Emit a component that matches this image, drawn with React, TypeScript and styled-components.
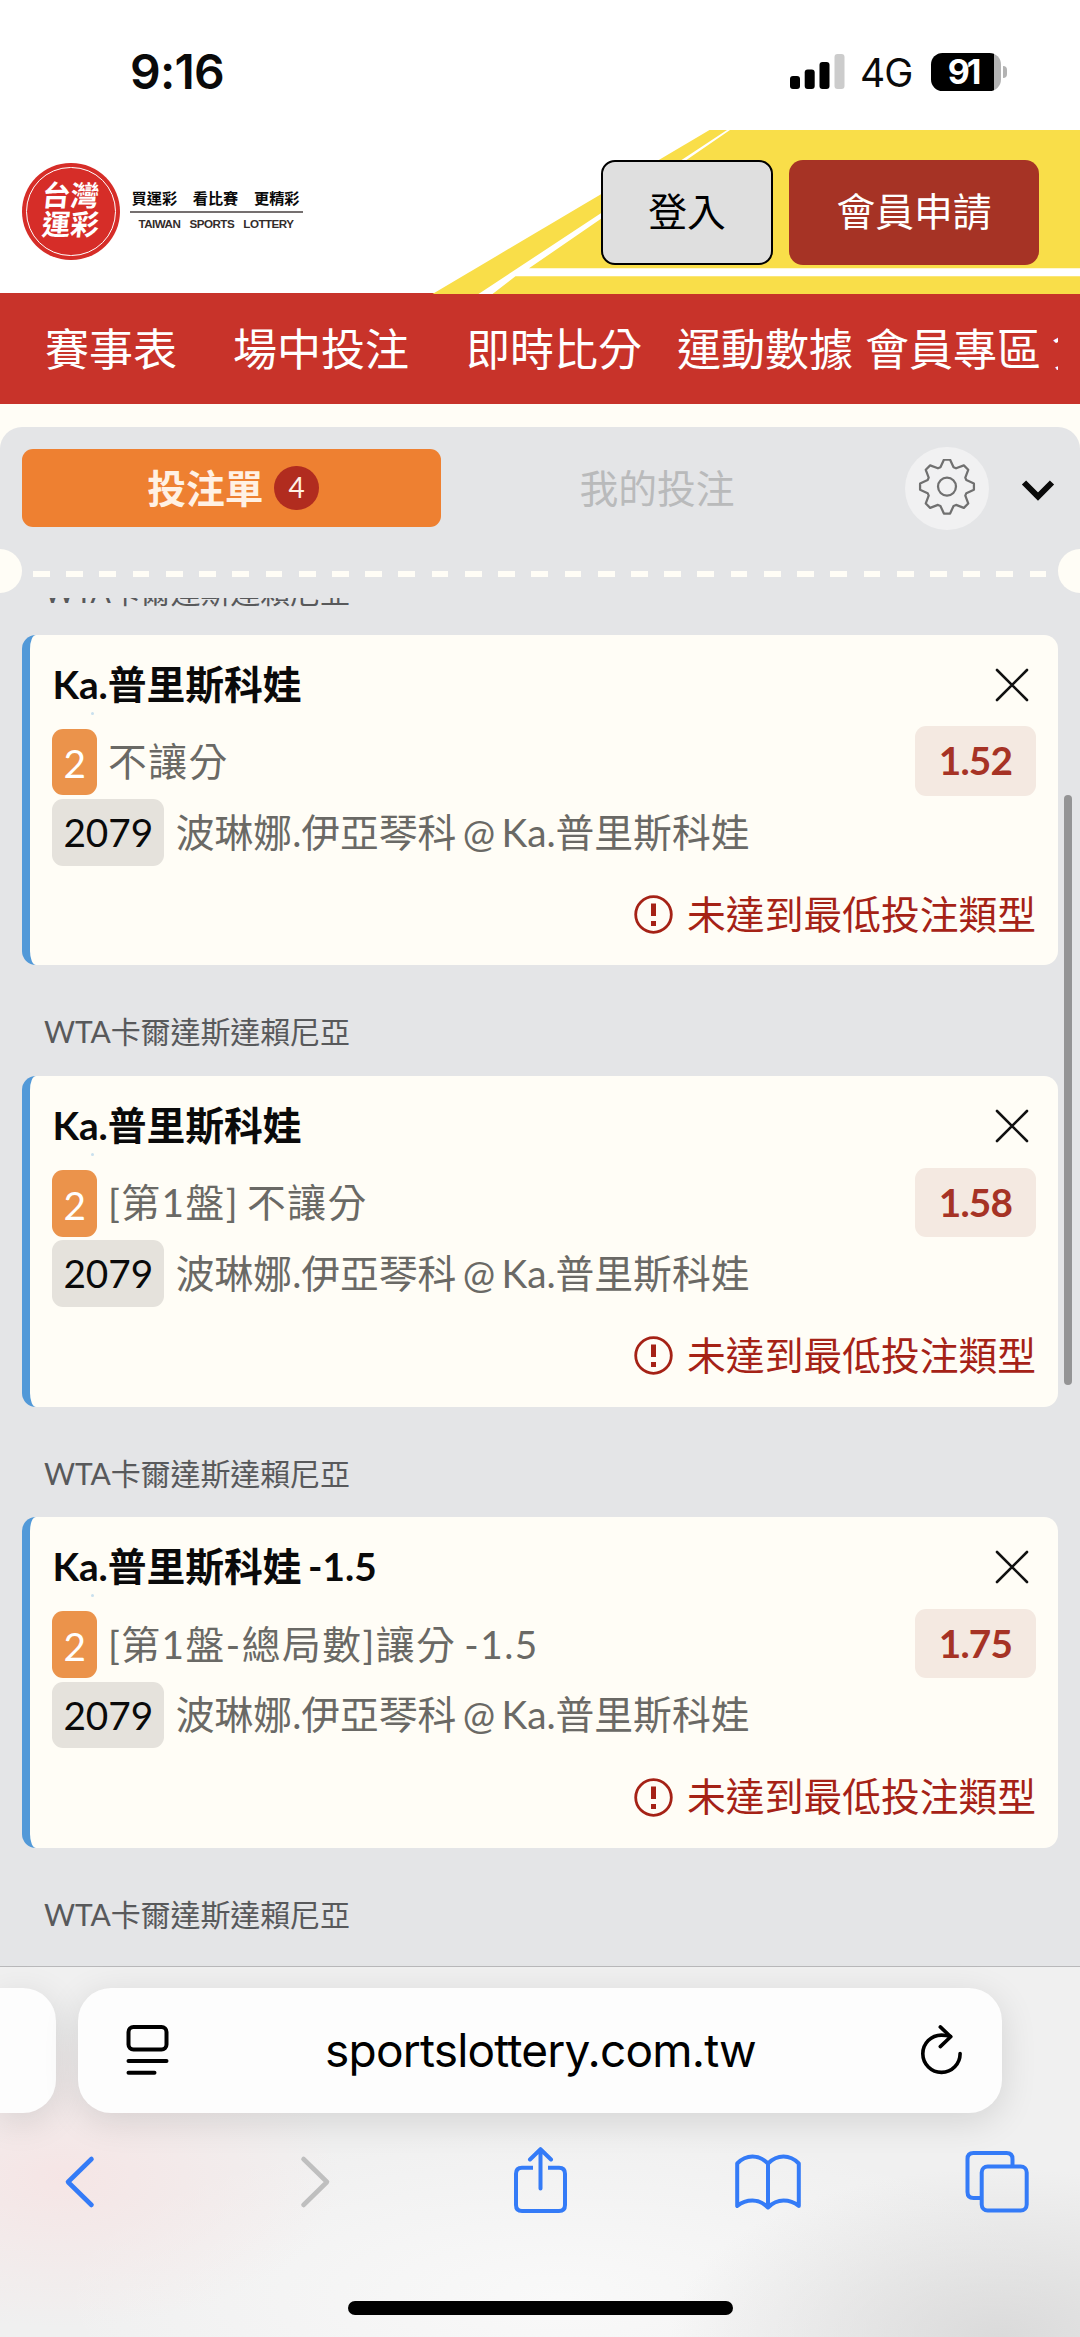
import React from "react";
import styled, { createGlobalStyle } from "styled-components";

const CREAM = "#fffdf6";
const BLUE = "#347bf7";

const GlobalStyle = createGlobalStyle`
  * { box-sizing: border-box; }
  body { margin: 0; background: #fff; }
  button { font: inherit; border: 0; padding: 0; background: none; color: inherit; }
  svg { display: block; flex: none; }
`;

const Screen = styled.div`
  width: 1080px;
  height: 2337px;
  display: flex;
  flex-direction: column;
  overflow: hidden;
  background: #fff;
  color: #0a0a0a;
  font-family: Lato, "Noto Sans CJK TC", sans-serif;
  font-size: 38.77px;
`;

/* ---------- status bar ---------- */

const StatusBar = styled.div`
  flex: none;
  height: 130px;
  padding: 13px 73px 0 130px;
  display: flex;
  align-items: center;
  justify-content: space-between;
  font-family: Inter, sans-serif;
`;

const Clock = styled.span`
  font-size: 48px;
  font-weight: 600;
  letter-spacing: -0.8px;
  line-height: 60px;
`;

const StatusIcons = styled.div`
  display: flex;
  align-items: center;
`;

const Network = styled.span`
  margin: 3px 0 0 15px;
  width: 71px;
  font-size: 39px;
  line-height: 48px;
  letter-spacing: -1px;
`;

const Battery = styled.div`
  width: 70px;
  height: 38px;
  border-radius: 11.5px;
  display: flex;
  align-items: center;
  justify-content: center;
  padding-right: 6px;
  background: linear-gradient(90deg, #000 63px, #b3b3b3 63px);
  color: #fff;
  font-size: 34px;
  font-weight: 700;
  letter-spacing: -3px;
`;

const BatteryTip = styled.div`
  margin-left: 2px;
  width: 4px;
  height: 12px;
  border-radius: 0 5px 5px 0;
  background: #b3b3b3;
`;

/* ---------- site header ---------- */

const Header = styled.header`
  position: relative;
  flex: none;
  height: 163.4px;
  padding: 29.6px 41px 0 22px;
  display: flex;
  align-items: flex-start;
`;

const HeaderArt = styled.svg`
  position: absolute;
  left: 0;
  top: 0;
`;

const Brand = styled.div`
  position: relative;
  display: flex;
  gap: 10px;
  margin-top: 3px;
`;

const Seal = styled.div`
  width: 97.5px;
  height: 97.5px;
  padding: 4px;
  border-radius: 50%;
  background: #d62d28;
`;

const SealRing = styled.div`
  height: 100%;
  padding-bottom: 2px;
  display: flex;
  flex-direction: column;
  align-items: center;
  justify-content: center;
  border: 1.8px solid #fff;
  border-radius: 50%;
  color: #fff;
  font-size: 28.5px;
  font-weight: 600;
  line-height: 29.5px;
`;

const SealText = styled.span`
  transform: skewX(-6deg);
`;

const Slogan = styled.div`
  width: 173px;
  padding-top: 23px;
  display: flex;
  flex-direction: column;
`;

const SloganZh = styled.div`
  display: flex;
  justify-content: space-between;
  padding: 0 3px 0 2px;
  height: 27px;
  border-bottom: 2px solid #757070;
  font-size: 15.2px;
  line-height: 24px;
  font-weight: 700;
`;

const SloganEn = styled.div`
  display: flex;
  justify-content: space-between;
  padding: 4px 9px 0;
  color: #332c2b;
  font-family: "Liberation Sans", sans-serif;
  font-size: 11.6px;
  letter-spacing: -0.5px;
  font-weight: 700;
  line-height: 14px;
`;

const HeaderButtons = styled.div`
  position: relative;
  margin-left: auto;
  display: flex;
  gap: 16px;
`;

const HeaderButton = styled.button<{ $primary?: boolean }>`
  width: ${(p) => (p.$primary ? 250 : 172)}px;
  height: 105.5px;
  padding-bottom: 2px;
  border-radius: 14px;
  border: ${(p) => (p.$primary ? "0" : "2.5px solid #000")};
  background: ${(p) => (p.$primary ? "#a63325" : "#dfdfdf")};
  color: ${(p) => (p.$primary ? "#fff" : "#000")};
  line-height: 56px;
`;

const Nav = styled.nav`
  flex: none;
  height: 110.9px;
  padding: 0 22px 0 45px;
  display: flex;
  align-items: center;
  background: #c8332a;
`;

const NavTrack = styled.div`
  flex: 1;
  display: flex;
  overflow: hidden;
  color: #fff;
  font-size: 44px;
  line-height: 64px;
  white-space: nowrap;
`;

const NavItem = styled.a<{ $gap: number }>`
  flex: none;
  margin-right: ${(p) => p.$gap}px;
`;

/* ---------- bet slip ---------- */

const SlipArea = styled.main`
  flex: none;
  height: 1561.7px;
  padding-top: 23px;
  background: ${CREAM};
`;

const Slip = styled.section`
  height: 100%;
  display: flex;
  flex-direction: column;
  border-radius: 22px 22px 0 0;
  background: #e4e5e7;
`;

const Tabs = styled.div`
  flex: none;
  height: 121.7px;
  padding: 19.4px 25px 0 22px;
  display: flex;
  align-items: flex-start;
`;

const Tab = styled.button<{ $active?: boolean }>`
  width: ${(p) => (p.$active ? 419 : 432)}px;
  height: 77.4px;
  margin-top: 2.6px;
  padding-left: ${(p) => (p.$active ? 3 : 0)}px;
  display: flex;
  align-items: center;
  justify-content: center;
  gap: 11px;
  border-radius: 11px;
  background: ${(p) => (p.$active ? "#ee8031" : "transparent")};
  color: ${(p) => (p.$active ? "#fff1e4" : "#b9babb")};
  font-weight: ${(p) => (p.$active ? 700 : 400)};
  line-height: 56px;
`;

const Count = styled.span`
  width: 44.4px;
  height: 44.4px;
  border-radius: 50%;
  background: #b12c1f;
  font-size: 28px;
  font-weight: 400;
  line-height: 43px;
  text-align: center;
`;

const SettingsButton = styled.button`
  width: 83.5px;
  height: 83.5px;
  margin: 0 auto 0 32px;
  display: flex;
  align-items: center;
  justify-content: center;
  border-radius: 50%;
  background: #f1f1f2;
`;

const Collapse = styled.button`
  margin-top: 33px;
`;

const Perforation = styled.div`
  flex: none;
  height: 44.4px;
  display: flex;
  align-items: center;
  justify-content: space-between;
`;

const Notch = styled.i<{ $right?: boolean }>`
  width: 22.2px;
  height: 44.4px;
  border-radius: ${(p) => (p.$right ? "22.2px 0 0 22.2px" : "0 22.2px 22.2px 0")};
  background: ${CREAM};
`;

const Dashes = styled.div`
  width: 1014px;
  height: 5.6px;
  margin-top: 5.6px;
  background: repeating-linear-gradient(90deg, ${CREAM} 0 16.8px, transparent 16.8px 33.22px);
`;

const ScrollArea = styled.div`
  flex: 1;
  min-height: 0;
  margin-top: 4.6px;
  padding: 0 8px 0 22px;
  display: flex;
  overflow: hidden;
`;

const BetList = styled.div`
  width: 1036px;
  margin-top: -28.5px;
`;

const League = styled.div<{ $tight?: boolean }>`
  height: ${(p) => (p.$tight ? 65.3 : 110.7)}px;
  padding: ${(p) => (p.$tight ? 0 : 44)}px 0 0 22px;
  color: #58595b;
  font-size: 30px;
  line-height: 44px;
  letter-spacing: -0.1px;
`;

const Card = styled.article`
  height: 330.6px;
  padding: 21px 22px 0 22.4px;
  border-left: 8.6px solid #5299d8;
  border-radius: 14px;
  background: ${CREAM};
`;

const CardHead = styled.div`
  height: 71.2px;
  display: flex;
  justify-content: space-between;
  padding-right: 7px;
`;

const Pick = styled.h3`
  margin: 0;
  font-size: inherit;
  font-weight: 700;
  line-height: 56px;
  word-spacing: -3px;
`;

const Speck = styled.i`
  display: block;
  width: 3px;
  height: 3px;
  margin: 0 0 0 39px;
  border-radius: 50%;
  background: #c9e0ee;
`;

const CloseButton = styled.button`
  align-self: flex-start;
  margin-top: 12px;
`;

const Row = styled.div`
  height: 70.3px;
  display: flex;
  align-items: center;
  color: #6a6965;
  white-space: nowrap;
  word-spacing: -3.5px;
`;

const Tag = styled.span<{ $tone: "orange" | "grey" }>`
  height: 66.5px;
  padding: ${(p) => (p.$tone === "orange" ? 1.5 : 0)}px 11px 0;
  border-radius: 11px;
  background: ${(p) => (p.$tone === "orange" ? "#eb934b" : "#e5e2dc")};
  color: ${(p) => (p.$tone === "orange" ? "#fff" : "#0a0a0a")};
  line-height: 66.5px;
`;

const Market = styled.span`
  margin: -2px 0 0 11px;
  letter-spacing: 1.5px;
  line-height: 56px;
`;

const Match = styled.span`
  margin: -1px 0 0 11.5px;
  line-height: 56px;
`;

const Odds = styled.span`
  width: 121px;
  height: 69.3px;
  margin: -2px 0 0 auto;
  border-radius: 11px;
  background: #f4e9e1;
  color: #a63325;
  font-weight: 700;
  line-height: 69.3px;
  letter-spacing: -0.8px;
  text-align: center;
`;

const Warning = styled.div`
  margin-top: 20px;
  display: flex;
  align-items: center;
  justify-content: flex-end;
  gap: 14px;
  color: #a52216;
  line-height: 56px;
`;

const WarningText = styled.span`
  margin-top: -2px;
`;

const ScrollThumb = styled.div`
  flex: none;
  width: 8.5px;
  height: 590px;
  margin: 196.7px 0 0 5.5px;
  border-radius: 5px;
  background: #949495;
`;

/* ---------- browser toolbar ---------- */

const Browser = styled.footer`
  flex: none;
  height: 371px;
  display: flex;
  flex-direction: column;
  border-top: 1px solid #b8b8ba;
  background:
    radial-gradient(ellipse 280px 150px at 60px 210px, rgba(246, 228, 228, 0.9), rgba(245, 228, 226, 0)),
    radial-gradient(ellipse 330px 170px at 1000px 371px, rgba(216, 216, 216, 0.9), rgba(225, 225, 225, 0)),
    radial-gradient(ellipse 500px 170px at 560px 330px, #f9f9f9, rgba(249, 249, 249, 0)),
    #f0f0f0;
`;

const AddressRow = styled.div`
  flex: none;
  display: flex;
  gap: 22px;
  padding-top: 20.7px;
`;

const PreviousTab = styled.div`
  width: 56px;
  height: 125px;
  border-radius: 0 33px 33px 0;
  background: #fdfdfd;
  box-shadow: 0 8px 36px rgba(0, 0, 0, 0.12);
`;

const AddressBar = styled.div`
  width: 924px;
  height: 125px;
  padding: 0 40px 0 48px;
  display: flex;
  align-items: center;
  justify-content: space-between;
  border-radius: 33px;
  background: #fdfdfd;
  box-shadow: 0 8px 36px rgba(0, 0, 0, 0.12);
`;

const Url = styled.span`
  margin: 0 9px 0 0;
  color: #000;
  font-family: Inter, sans-serif;
  font-size: 46px;
  letter-spacing: -0.8px;
  line-height: 60px;
`;

const Toolbar = styled.div`
  flex: none;
  height: 138.6px;
  padding-left: 64px;
  display: flex;
  align-items: center;
`;

const ToolButton = styled.button<{ $gap: number }>`
  margin-right: ${(p) => p.$gap}px;
`;

const HomeIndicator = styled.div`
  width: 385px;
  height: 14px;
  margin: 49.7px auto 0;
  border-radius: 7px;
  background: #000;
`;

/* ---------- icons ---------- */

const SignalIcon = () => (
  <svg width="55" height="35" viewBox="0 0 55 35">
    <rect x="0" y="22" width="10" height="13" rx="3" />
    <rect x="14.7" y="15.500" width="10" height="19.500" rx="3" />
    <rect x="29.500" y="8" width="10" height="27" rx="3" />
    <rect x="44.500" y="0" width="10" height="35" rx="3" fill="#ccc" />
  </svg>
);

const gearPath = (() => {
  const tooth = [[-19, -56], [-9, -78], [9, -78], [19, -56]];
  const points: string[] = [];
  for (let i = 0; i < 8; i++) {
    const a = (i * Math.PI) / 4;
    for (const [x, y] of tooth) {
      points.push(
        `${(x * Math.cos(a) - y * Math.sin(a)).toFixed(1)} ${(x * Math.sin(a) + y * Math.cos(a)).toFixed(1)}`
      );
    }
  }
  return `M${points.join("L")}Z`;
})();

const GearIcon = () => (
  <svg width="58" height="58" viewBox="-84 -80 168 168" fill="none" stroke="#707070" strokeWidth="6.500" strokeLinejoin="round">
    <path d={gearPath} />
    <circle r="26" />
  </svg>
);

const ChevronDown = () => (
  <svg width="34" height="21" viewBox="0 0 34 21" fill="none" stroke="#0a0a0a" strokeWidth="6">
    <path d="M3 2.500L17 16.500L31 2.500" />
  </svg>
);

const CloseIcon = () => (
  <svg width="34" height="34" viewBox="0 0 34 34" fill="none" stroke="#111" strokeWidth="2.600" strokeLinecap="round">
    <path d="M2 2L32 32M32 2L2 32" />
  </svg>
);

const AlertIcon = () => (
  <svg width="39" height="39" viewBox="0 0 39 39" fill="#a52216">
    <circle cx="19.500" cy="19.500" r="17.800" fill="none" stroke="#a52216" strokeWidth="2.800" />
    <path d="M17 8.500h5v12.500h-5zM17 26h5v5h-5z" />
  </svg>
);

const PageIcon = () => (
  <svg width="43" height="50" viewBox="0 0 43 50" fill="none" stroke="#000" strokeWidth="4" strokeLinecap="round">
    <rect x="2.500" y="2" width="38" height="22.500" rx="5" />
    <path d="M2.500 36H40.500M2.500 47.800H28.500" />
  </svg>
);

const ReloadIcon = () => (
  <svg width="41" height="50" viewBox="0 0 41 50" fill="none" stroke="#000" strokeWidth="3.600" strokeLinecap="round" strokeLinejoin="round">
    <path d="M39.100 28.500A18.650 18.650 0 1 1 20.450 10.100Q25.500 10.100 29.500 11.500" />
    <path d="M19.300 1.900L29.700 11.800L19.300 21.600" />
  </svg>
);

const BackIcon = () => (
  <svg width="31" height="54" viewBox="0 0 31 54" fill="none" stroke={BLUE} strokeWidth="4.600" strokeLinecap="round" strokeLinejoin="round">
    <path d="M27.500 4L4 27L27.500 50" />
  </svg>
);

const ForwardIcon = () => (
  <svg width="31" height="54" viewBox="0 0 31 54" fill="none" stroke="#bfbfbf" strokeWidth="4.600" strokeLinecap="round" strokeLinejoin="round">
    <path d="M3.500 4L27 27L3.500 50" />
  </svg>
);

const ShareIcon = () => (
  <svg width="53" height="69" viewBox="0 0 53 69" fill="none" stroke={BLUE} strokeWidth="4" strokeLinecap="round" strokeLinejoin="round">
    <path strokeLinecap="butt" d="M19 20.700H8Q2 20.700 2 26.700V58Q2 64 8 64H45Q51 64 51 58V26.700Q51 20.700 45 20.700H34" />
    <path d="M26.500 41.500V3M16 12.500L26.500 2.200L37 12.500" />
  </svg>
);

const BookIcon = () => (
  <svg width="66" height="56" viewBox="0 0 66 56" fill="none" stroke={BLUE} strokeWidth="4" strokeLinecap="round" strokeLinejoin="round">
    <path d="M2.200 9.500Q9 2.500 17.500 2.500T33 9.500Q40 2.500 48.500 2.500T63.800 9.500V52Q57 46.500 48.500 46.500T33 53.500Q26 46.500 17.500 46.500T2.200 52ZM33 10V53" />
  </svg>
);

const TabsIcon = () => (
  <svg width="64" height="62" viewBox="0 0 64 62" fill="none" stroke={BLUE} strokeWidth="4">
    <path d="M47.500 14.500V8Q47.500 2 41.500 2H8.500Q2.500 2 2.500 8V41Q2.500 47 8.500 47H16.500" />
    <rect x="16.700" y="15.500" width="45" height="44" rx="6" />
  </svg>
);

/* ---------- data ---------- */

const navItems = [
  { label: "賽事表", gap: 56 },
  { label: "場中投注", gap: 57 },
  { label: "即時比分", gap: 35 },
  { label: "運動數據", gap: 12 },
  { label: "會員專區", gap: 11 },
  { label: "兌", gap: 0 },
];

const bets = [
  { pick: "Ka.普里斯科娃", market: "不讓分", odds: "1.52" },
  { pick: "Ka.普里斯科娃", market: "[第1盤] 不讓分", odds: "1.58" },
  { pick: "Ka.普里斯科娃 -1.5", market: "[第1盤-總局數]讓分 -1.5", odds: "1.75" },
];

const LEAGUE = "WTA卡爾達斯達賴尼亞";

const BetCard = ({ pick, market, odds }: { pick: string; market: string; odds: string }) => (
  <Card>
    <CardHead>
      <div>
        <Pick>{pick}</Pick>
        <Speck />
      </div>
      <CloseButton aria-label="移除">
        <CloseIcon />
      </CloseButton>
    </CardHead>
    <Row>
      <Tag $tone="orange">2</Tag>
      <Market>{market}</Market>
      <Odds>{odds}</Odds>
    </Row>
    <Row>
      <Tag $tone="grey">2079</Tag>
      <Match>波琳娜.伊亞琴科 @ Ka.普里斯科娃</Match>
    </Row>
    <Warning>
      <AlertIcon />
      <WarningText>未達到最低投注類型</WarningText>
    </Warning>
  </Card>
);

export default function App() {
  return (
    <Screen>
      <GlobalStyle />
      <StatusBar>
        <Clock>9:16</Clock>
        <StatusIcons>
          <SignalIcon />
          <Network>4G</Network>
          <Battery>91</Battery>
          <BatteryTip />
        </StatusIcons>
      </StatusBar>

      <Header>
        <HeaderArt width="1080" height="164" viewBox="0 0 1080 164">
          <path d="M709.500 0H1080V164H432.500Z" fill="#f9de49" />
          <path d="M727 0H730L529 138.300H1080V146.300H515.500L492.500 164H478.500Z" fill="#fff" />
        </HeaderArt>
        <Brand>
          <Seal>
            <SealRing>
              <SealText>台灣</SealText>
              <SealText>運彩</SealText>
            </SealRing>
          </Seal>
          <Slogan>
            <SloganZh>
              <span>買運彩</span>
              <span>看比賽</span>
              <span>更精彩</span>
            </SloganZh>
            <SloganEn>
              <span>TAIWAN</span>
              <span>SPORTS</span>
              <span>LOTTERY</span>
            </SloganEn>
          </Slogan>
        </Brand>
        <HeaderButtons>
          <HeaderButton>登入</HeaderButton>
          <HeaderButton $primary>會員申請</HeaderButton>
        </HeaderButtons>
      </Header>

      <Nav>
        <NavTrack>
          {navItems.map((item) => (
            <NavItem key={item.label} $gap={item.gap}>
              {item.label}
            </NavItem>
          ))}
        </NavTrack>
      </Nav>

      <SlipArea>
        <Slip>
          <Tabs>
            <Tab $active>
              投注單<Count>4</Count>
            </Tab>
            <Tab>我的投注</Tab>
            <SettingsButton aria-label="設定">
              <GearIcon />
            </SettingsButton>
            <Collapse aria-label="收合">
              <ChevronDown />
            </Collapse>
          </Tabs>
          <Perforation>
            <Notch />
            <Dashes />
            <Notch $right />
          </Perforation>
          <ScrollArea>
            <BetList>
              <League $tight>{LEAGUE}</League>
              {bets.map((bet) => (
                <React.Fragment key={bet.odds}>
                  <BetCard {...bet} />
                  <League>{LEAGUE}</League>
                </React.Fragment>
              ))}
            </BetList>
            <ScrollThumb />
          </ScrollArea>
        </Slip>
      </SlipArea>

      <Browser>
        <AddressRow>
          <PreviousTab />
          <AddressBar>
            <PageIcon />
            <Url>sportslottery.com.tw</Url>
            <ReloadIcon />
          </AddressBar>
        </AddressRow>
        <Toolbar>
          <ToolButton $gap={205}>
            <BackIcon />
          </ToolButton>
          <ToolButton $gap={182.5}>
            <ForwardIcon />
          </ToolButton>
          <ToolButton $gap={168.5}>
            <ShareIcon />
          </ToolButton>
          <ToolButton $gap={163.5}>
            <BookIcon />
          </ToolButton>
          <ToolButton $gap={0}>
            <TabsIcon />
          </ToolButton>
        </Toolbar>
        <HomeIndicator />
      </Browser>
    </Screen>
  );
}
